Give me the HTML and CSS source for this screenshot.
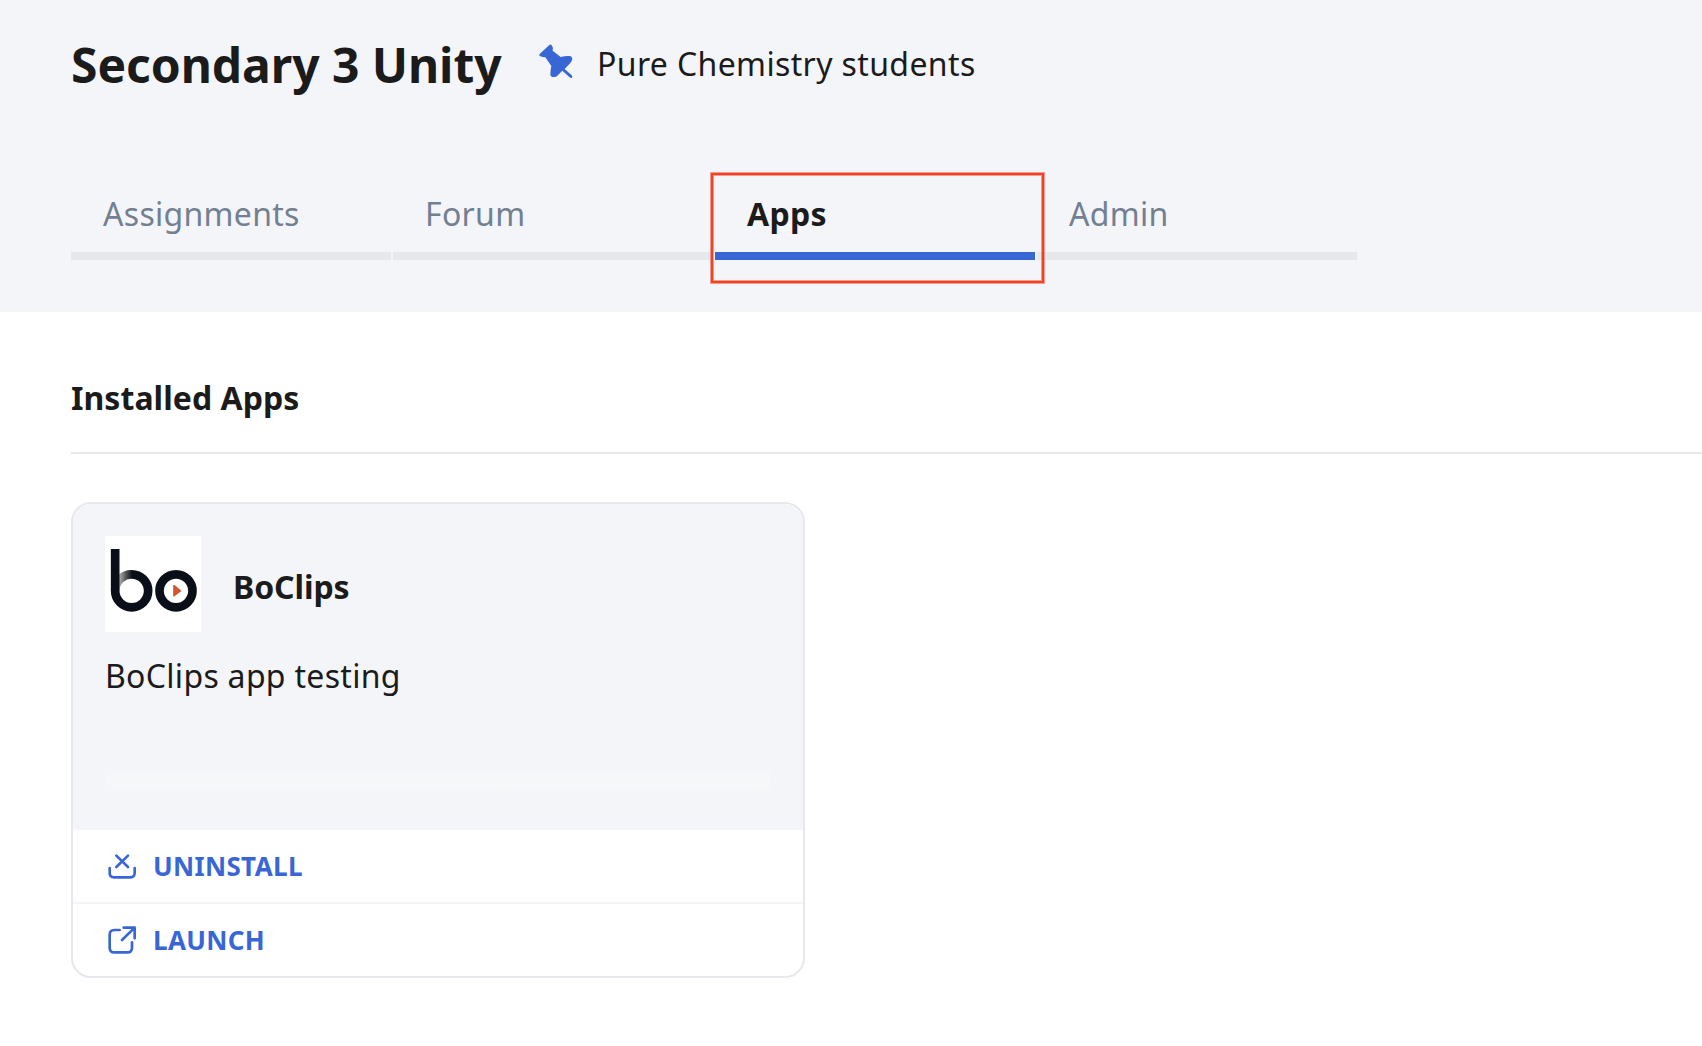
FILE: index.html
```html
<!DOCTYPE html>
<html lang="en">
<head>
<meta charset="utf-8">
<title>Secondary 3 Unity</title>
<link rel="stylesheet" href="styles.css">
</head>
<body>
<header class="header">
  <div class="title-row">
    <h1 class="title">Secondary 3 Unity</h1>
    <svg class="pin" viewBox="54 39 108 108" aria-hidden="true"><path d="M59 72 L88 45 Q92 41 95 46 L99 54 Q98 58 98 62 L122 81 Q136 77 149 78 Q157 79 157 86 Q156 93 151 99 L134 117 L155 136 Q158 140 156 143 Q152 145 148 141 L127 122 L112 137 Q109 141 102 141 Q92 141 91 134 Q91 121 94 108 L76 82 Q68 82 61 79 Q55 76 59 72Z"/></svg>
    <p class="subtitle">Pure Chemistry students</p>
  </div>
  <nav class="tabs">
    <a class="tab">Assignments</a>
    <a class="tab">Forum</a>
    <a class="tab tab-active">Apps<span class="highlight"></span></a>
    <a class="tab">Admin</a>
  </nav>
</header>
<main class="content">
  <h2 class="section-title">Installed Apps</h2>
  <article class="card">
    <div class="card-body">
      <div class="app-head">
        <svg class="logo" viewBox="30 33 288 288" aria-hidden="true">
          <defs><linearGradient id="fold" gradientUnits="userSpaceOnUse" x1="73" y1="0" x2="112" y2="0"><stop offset="0" stop-color="#b0b0ae"/><stop offset=".5" stop-color="#55565a"/><stop offset="1" stop-color="#0a0e18"/></linearGradient></defs>
          <rect x="30" y="33" width="288" height="288" fill="#fff"/>
          <g fill="none" stroke="#0a0e18" stroke-width="26">
            <path d="M60.500 197.500 A49.500 49.500 0 0 1 112 148" stroke="url(#fold)"/>
            <path d="M110 148 A49.500 49.500 0 1 1 60.500 197.500 V72"/>
            <circle cx="243" cy="197.500" r="49.500"/>
          </g>
          <path d="M237 182 L256 197.500 L237 212Z" fill="#d2562f" stroke="#d2562f" stroke-width="5" stroke-linejoin="round"/>
        </svg>
        <h3 class="app-name">BoClips</h3>
      </div>
      <p class="app-desc">BoClips app testing</p>
      <div class="desc-fade"></div>
    </div>
    <a class="action">
      <svg class="icon icon-uninstall" viewBox="141 126 90 90" aria-hidden="true"><path d="M169 137 L204 171 M204 137 L169 171 M149 174 V189 Q149 202 162 202 H211 Q224 202 224 189 V174"/></svg>
      <span>UNINSTALL</span>
    </a>
    <a class="action">
      <svg class="icon icon-launch" viewBox="141 345 90 90" aria-hidden="true"><path d="M179 360 H163 Q149 360 149 374 V413 Q149 427 163 427 H202 Q216 427 216 413 V397 M191 353 H224 V385 M224 353 L186 390"/></svg>
      <span>LAUNCH</span>
    </a>
  </article>
</main>
</body>
</html>
```
FILE: styles.css
```css
* { box-sizing: border-box; }

body {
  margin: 0;
  background: #fff;
  color: #1b1b1b;
  font: 400 32px/48px "Noto Sans", sans-serif;
  letter-spacing: 0.3px;
}

h1, h2, h3, p { margin: 0; }

.header {
  height: 312px;
  padding: 29px 0 0 71px;
  background: #f4f5f9;
}

.title-row { display: flex; }

.title {
  width: 431px;
  white-space: nowrap;
  font-size: 48px;
  line-height: 72px;
  font-weight: 700;
  letter-spacing: -0.06px;
}

.pin {
  width: 36px;
  height: 36px;
  margin: 14px 23px 0 36px;
  fill: #3867d5;
}

.subtitle {
  padding-top: 11px;
  letter-spacing: 0.37px;
}

.tabs {
  display: flex;
  gap: 2px;
  margin-top: 89px;
}

.tab {
  position: relative;
  width: 320px;
  padding: 0 32px 14px;
  border-bottom: 8px solid #e7e8ec;
  color: #728091;
}

.tab-active {
  z-index: 1;
  border-color: #3867d5;
  color: #1b1b1b;
  font-weight: 700;
}

/* Callout frame around the active tab */
.highlight {
  position: absolute;
  top: -17px;
  left: -4px;
  width: 333px;
  height: 110px;
  border: 2px solid #f04124;
  box-shadow: 0 0 0 1px #f0412480, inset 0 0 0 1px #f0412480;
}

.content { padding: 62px 0 0 71px; }

.section-title {
  padding-bottom: 30px;
  border-bottom: 2px solid #e7e8ed;
  font-size: 32px;
  font-weight: 700;
  letter-spacing: 0.05px;
}

.card {
  width: 734px;
  margin-top: 48px;
  overflow: hidden;
  border: 2px solid #e7e8ee;
  border-radius: 20px;
}

.card-body {
  height: 326px;
  padding: 32px 32px 0;
  background: #f4f5f9;
}

.app-head { display: flex; gap: 32px; }

.logo { width: 96px; height: 96px; }

.app-name {
  padding-top: 27px;
  font-size: 32px;
  font-weight: 700;
  letter-spacing: -0.1px;
}

.app-desc { margin-top: 20px; }

.desc-fade {
  width: 666px;
  height: 32px;
  margin-top: 64px;
  background: linear-gradient(#f6f7f900, #f6f7f9 40%, #f6f7f9 70%, #f6f7f900);
}

.action {
  display: flex;
  align-items: center;
  height: 72px;
  padding-left: 34px;
  color: #3867d5;
  font-size: 26px;
  line-height: 36px;
  font-weight: 700;
  letter-spacing: 0.35px;
}

.action + .action {
  height: 74px;
  border-top: 2px solid #f4f5f9;
}

.icon {
  width: 30px;
  height: 30px;
  margin-right: 16px;
  fill: none;
  stroke: #3867d5;
  stroke-width: 8;
  stroke-linecap: round;
  stroke-linejoin: round;
}

.icon-uninstall { margin-top: 2px; }
```
